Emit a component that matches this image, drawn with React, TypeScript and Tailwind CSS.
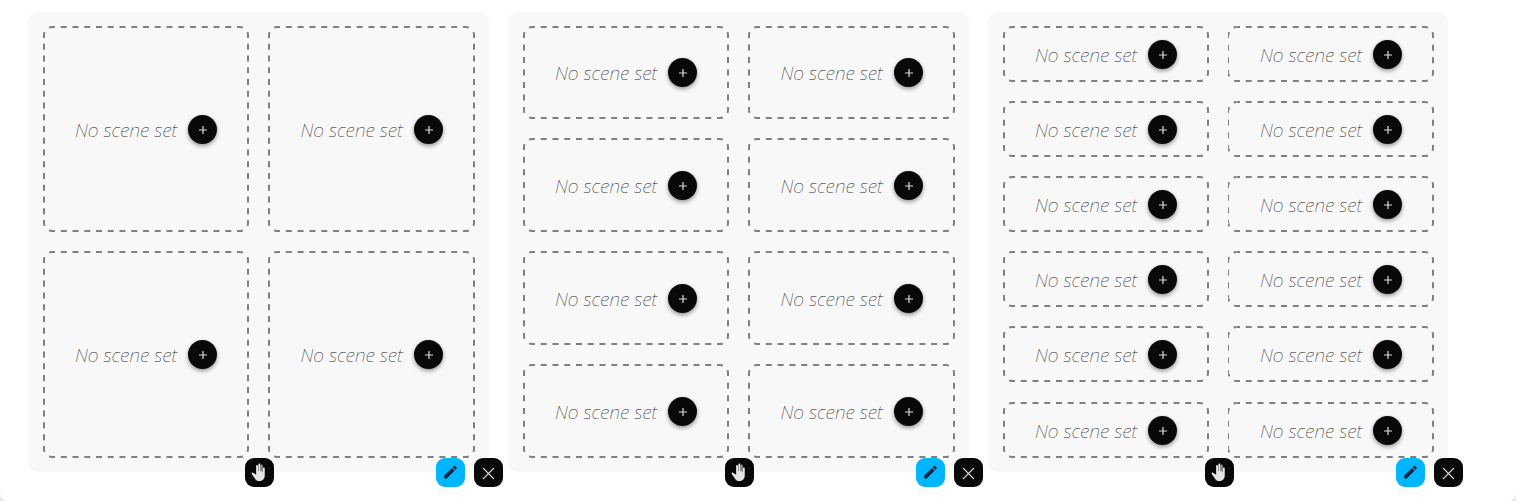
import React from "react";

type Row = { height: number; className: string };
type Layout = { rows: Row[]; panel: string; lastWidth: number; thinLeft: boolean };

const layouts: Layout[] = [
  {
    panel: "w-[461px]",
    lastWidth: 207,
    thinLeft: false,
    rows: [
      { height: 206, className: "h-[206px]" },
      { height: 207, className: "h-[207px]" },
    ],
  },
  {
    panel: "w-[461px]",
    lastWidth: 207,
    thinLeft: false,
    rows: [
      { height: 93, className: "h-[93px]" },
      { height: 94, className: "h-[94px]" },
      { height: 94, className: "h-[94px]" },
      { height: 94, className: "h-[94px]" },
    ],
  },
  {
    panel: "w-[460px]",
    lastWidth: 206,
    thinLeft: true,
    rows: [
      { height: 56, className: "h-14" },
      { height: 56, className: "h-14" },
      { height: 56, className: "h-14" },
      { height: 56, className: "h-14" },
      { height: 56, className: "h-14" },
      { height: 56, className: "mt-px h-14" },
    ],
  },
];

const RADIUS = 9;

function DashedFrame({ width: w, height: h, thinLeft }: { width: number; height: number; thinLeft: boolean }) {
  const dashes = (length: number) => {
    const straight = length - RADIUS * 2;
    const pitch = straight / Math.round(straight / 12);
    return `6 ${pitch - 6}`;
  };
  const r = RADIUS;
  const left = thinLeft ? 0.5 : 1;
  const arc = `A${r - 1} ${r - 1} 0 0 1`;
  return (
    <svg width={w} height={h} className="absolute inset-0" fill="none" stroke="#808080" strokeWidth="2">
      <g strokeDasharray={dashes(w)} strokeDashoffset="3">
        <path d={`M${r} 1H${w - r}`} />
        <path d={`M${r} ${h - 1}H${w - r}`} />
      </g>
      <g strokeDasharray={dashes(h)} strokeDashoffset="3">
        <path d={`M${left} ${r}V${h - r}`} strokeWidth={thinLeft ? 1 : 2} />
        <path d={`M${w - 1} ${r}V${h - r}`} />
      </g>
      <g strokeDasharray="3 6.6 3 20">
        <path d={`M${left} ${r}${arc} ${r} 1`} />
        <path d={`M${w - r} 1${arc} ${w - 1} ${r}`} />
        <path d={`M${w - 1} ${h - r}${arc} ${w - r} ${h - 1}`} />
        <path d={`M${r} ${h - 1}${arc} ${left} ${h - r}`} />
      </g>
    </svg>
  );
}

function AddButton() {
  return (
    <button
      aria-label="Add scene"
      className="flex size-[29px] shrink-0 items-center justify-center rounded-full bg-[#08090b] shadow-[0_2px_4px_rgba(0,0,0,0.4)]"
    >
      <svg viewBox="0 0 9 9" className="size-[9px] translate-x-[0.5px] translate-y-[0.5px]" stroke="#dcdcdc" strokeWidth="1.2">
        <path d="M4.5 .5v8M.5 4.5h8" />
      </svg>
    </button>
  );
}

function Scene({ width, height, thinLeft = false }: { width: number; height: number; thinLeft?: boolean }) {
  return (
    <div className="relative flex items-center justify-center gap-[10px]">
      <DashedFrame width={width} height={height} thinLeft={thinLeft} />
      <span className="w-[103px] pt-px text-[19px] leading-[26px] font-thin whitespace-nowrap text-[#222] italic opacity-99">
        No scene set
      </span>
      <AddButton />
    </div>
  );
}

function Panel({ layout }: { layout: Layout }) {
  return (
    <section className={`relative h-[460px] shrink-0 rounded-[10px] bg-[#f8f8f8] pt-[14px] pr-[14px] pl-[15px] ${layout.panel}`}>
      <div className="flex flex-col gap-[19px]">
        {layout.rows.map((row, i) => (
          <div key={i} className={`grid grid-cols-[206px_1fr] gap-[19px] ${row.className}`}>
            <Scene width={206} height={row.height} />
            <Scene width={layout.lastWidth} height={row.height} thinLeft={layout.thinLeft} />
          </div>
        ))}
      </div>
      <button
        aria-label="Move"
        className="absolute top-[446px] left-[217px] flex size-[29px] items-center justify-center rounded-[9px] bg-[#08090b]"
      >
        <svg viewBox="0 0 24 24" className="size-[18px] -translate-x-[2px] -translate-y-px">
          <path
            fill="#e6e6e6"
            d="M21 7c0-1.38-2.5-1.38-2.5 0v5h-.5V3.5c0-1.66-2.5-1.66-2.5 0V11H15V2c0-1.66-2.5-1.66-2.5 0v9H12V4c0-1.66-2.5-1.66-2.5 0v11.5L5.3 13c-1.1-.6-2.3.5-1.6 1.5l4.2 6C9.3 22.8 11 24 13.5 24 18 24 21 21 21 16.5z"
          />
          <path fill="#8b8b8b" d="M15.5 3.5c0-1.66 2.5-1.66 2.5 0V11h-2.5z" />
        </svg>
      </button>
      <div className="absolute top-[446px] left-[408px] flex gap-[9px]">
        <button aria-label="Edit" className="flex size-[29px] items-center justify-center rounded-[9px] bg-[#00b7ff]">
          <svg viewBox="0 0 24 24" className="size-[17px] -translate-y-[0.5px]" fill="#06283d">
            <path d="M3 17.25V21h3.75L17.81 9.94l-3.75-3.75L3 17.25zM20.71 7.04a1 1 0 0 0 0-1.41l-2.34-2.34a1 1 0 0 0-1.41 0l-1.83 1.83 3.75 3.75 1.83-1.83z" />
          </svg>
        </button>
        <button aria-label="Close" className="flex size-[29px] items-center justify-center rounded-[9px] bg-[#08090b]">
          <svg
            viewBox="0 0 12 12"
            className="size-[12px] -translate-x-[0.5px] translate-y-[0.5px]"
            stroke="#e6e6e6"
            strokeWidth="1.2"
            strokeLinecap="round"
          >
            <path d="M.7.7l10.6 10.6M11.3.7L.7 11.3" />
          </svg>
        </button>
      </div>
    </section>
  );
}

export default function App() {
  return (
    <div className="h-[501px] bg-[#e8e8e8] font-['Noto_Sans',sans-serif]">
      <main className="flex h-full gap-[19px] overflow-hidden rounded-b-[8px] bg-white pt-[12px] pl-[28px]">
        {layouts.map((layout) => (
          <Panel key={layout.rows.length} layout={layout} />
        ))}
      </main>
    </div>
  );
}
